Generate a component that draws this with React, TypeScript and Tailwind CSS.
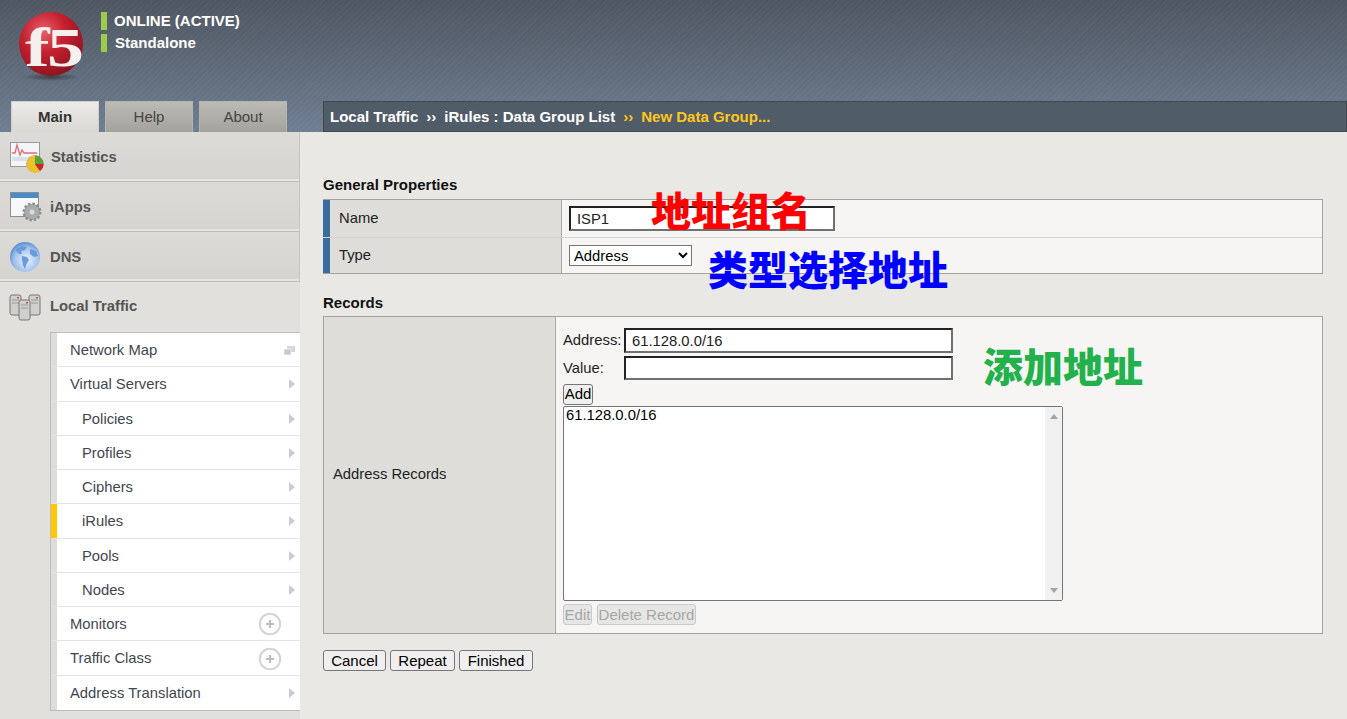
import React from "react";

const font = "font-['Liberation_Sans',Arial,sans-serif]";

function Logo() {
  return (
    <svg width="70" height="70" viewBox="0 0 70 70" className="block">
      <defs>
        <radialGradient id="rg" cx="38%" cy="30%" r="75%">
          <stop offset="0%" stopColor="#e8606b" />
          <stop offset="45%" stopColor="#c5202f" />
          <stop offset="100%" stopColor="#8a1420" />
        </radialGradient>
        <radialGradient id="sh" cx="50%" cy="50%" r="50%">
          <stop offset="0%" stopColor="#222" stopOpacity="0.6" />
          <stop offset="100%" stopColor="#222" stopOpacity="0" />
        </radialGradient>
      </defs>
      <ellipse cx="35" cy="66" rx="29" ry="4" fill="url(#sh)" />
      <circle cx="35" cy="33" r="32" fill="url(#rg)" />
      <text transform="translate(9 55) scale(1.32 1)" fontFamily="'Liberation Serif',serif" fontWeight="700" fontSize="56" letterSpacing="-2" fill="#f4f0ee">f5</text>
    </svg>
  );
}

function StatIcon() {
  return (
    <svg width="36" height="32" viewBox="0 0 36 32">
      <rect x="1.5" y="1.5" width="29" height="24" fill="#f4f5f7" stroke="#9a9a9a" />
      <path d="M3 12h3l2-8 3 10 2-5 2 3h13" fill="none" stroke="#de6e76" strokeWidth="1.3" />
      <path d="M3 17h26M3 19h26" stroke="#b6cde2" strokeWidth="1" />
      <circle cx="26" cy="23" r="8.5" fill="#c9272d" />
      <path d="M26 23V14.5a8.5 8.5 0 0 1 8.5 8.5z" fill="#5aa33a" />
      <path d="M26 23l5 7a8.5 8.5 0 0 1-13.5-7 8.5 8.5 0 0 1 8.5-8.5z" fill="#e8c42a" />
      <path d="M26 23h8.5a8.5 8.5 0 0 1-3.5 7z" fill="#c9272d" />
    </svg>
  );
}
function AppsIcon() {
  return (
    <svg width="36" height="32" viewBox="0 0 36 32">
      <rect x="1.5" y="1.5" width="28" height="24" fill="#f7f8fa" stroke="#8d8d8d" />
      <rect x="2" y="2" width="27" height="5" fill="#4a8cc9" />
      <circle cx="23" cy="21" r="8" fill="#a3a6a8" stroke="#8b8d8f" strokeWidth="3" strokeDasharray="2.4 1.8" />
      <circle cx="23" cy="21" r="7" fill="#a9abad" />
      <circle cx="23" cy="21" r="2.5" fill="#d8dadb" />
    </svg>
  );
}
function GlobeIcon() {
  return (
    <svg width="32" height="32" viewBox="0 0 32 32">
      <defs>
        <radialGradient id="gl" cx="55%" cy="60%" r="60%">
          <stop offset="0%" stopColor="#eef4fd" />
          <stop offset="70%" stopColor="#9fc0ec" />
          <stop offset="100%" stopColor="#5f8ccf" />
        </radialGradient>
      </defs>
      <circle cx="16" cy="16" r="15" fill="url(#gl)" />
      <path d="M7 8l6-3 5 1-2 3-4 1 1 3-3 0-3-3zM13 15l5 1 2 3-3 5-1 4-2-4-1-5zM21 8l6 2 2 5-4 1-4-3z" fill="#6a9bdc" />
    </svg>
  );
}
function TrafficIcon() {
  const S = ({ x, y }: { x: number; y: number }) => (
    <g>
      <rect x={x} y={y} width="11" height="20" rx="2" fill="#cfcfcc" stroke="#77777a" />
      <path d={`M${x + 2} ${y + 5}h7M${x + 2} ${y + 8}h7`} stroke="#9a9a9a" />
      <rect x={x + 7} y={y + 2} width="2" height="1.5" fill="#d84a4a" />
    </g>
  );
  return (
    <svg width="32" height="28" viewBox="0 0 32 28">
      <S x={1} y={1} />
      <S x={20} y={1} />
      <S x={10} y={6} />
    </svg>
  );
}

function Section({ icon, label, w }: { icon: React.ReactNode; label: string; w: string }) {
  return (
    <div className="h-[50px] border-r border-b border-r-[#c6c5c1] border-b-[#bdbcb8] bg-[#e6e5e2] pb-[2px]">
      <div className="flex h-full items-center bg-gradient-to-b from-[#dcdbd7] to-[#d5d4d0] pt-[3px]">
        <div className={`${w} pl-[9px]`}>{icon}</div>
        <span className="text-[14.8px] font-bold text-[#555]">{label}</span>
      </div>
    </div>
  );
}

function Row({ label, sub, active, kind }: { label: string; sub?: boolean; active?: boolean; kind: "arrow" | "plus" | "win" }) {
  return (
    <div className="flex h-[34.27px] items-stretch border-b border-[#e4e4e2] last:border-b-0">
      <div className={`w-[6px] shrink-0 ${active ? "bg-[#ffc800]" : "bg-[#dddddb]"}`} />
      <div className={`flex flex-1 items-center justify-between bg-white pt-[1px] ${sub ? "pl-[25px]" : "pl-[13px]"}`}>
        <span className="text-[14.8px] text-[#3f4650]">{label}</span>
        {kind === "arrow" && <span className="mr-[5px] h-0 w-0 border-y-[5px] border-l-[6px] border-y-transparent border-l-[#cccccc]" />}
        {kind === "win" && (
          <svg width="11" height="9" viewBox="0 0 11 9" className="mr-[5px]">
            <rect x="3" y="0" width="8" height="6" fill="#d6d6d6" />
            <rect x="0" y="3" width="7" height="6" fill="#c8c8c8" stroke="#fff" strokeWidth="0.6" />
          </svg>
        )}
        {kind === "plus" && (
          <svg width="24" height="24" viewBox="0 0 24 24" className="mr-[18px]">
            <circle cx="12" cy="12" r="10.2" fill="#fff" stroke="#d4d4d4" strokeWidth="2" />
            <path d="M12 8v8M8 12h8" stroke="#bdbdbd" strokeWidth="2" />
          </svg>
        )}
      </div>
    </div>
  );
}

const btn = "h-[21px] rounded-[3px] border border-[#767676] bg-[#efefef] px-0 text-[15px] leading-[18px] text-black";
const btnOff = "h-[21px] rounded-[3px] border border-[#c9c9c9] bg-[#e6e6e4] px-0 text-[15px] leading-[18px] text-[#a6a6a6]";
const inset = "border-2 border-t-[#222] border-l-[#222] border-r-[#707070] border-b-[#707070] bg-white text-[14.8px] text-[#222] pl-[6px] pt-[1px] outline-none";
const cjk = "absolute font-['Noto_Sans_CJK_SC',sans-serif] text-[40px] leading-[58px] font-black";

export default function App() {
  return (
    <div className={`relative h-[719px] w-[1347px] overflow-hidden bg-[#e9e8e5] ${font}`}>
      <header className="flex h-[132px] flex-col justify-between [background:repeating-linear-gradient(135deg,rgba(255,255,255,0.02)_0_2px,rgba(0,0,0,0.02)_2px_4px),linear-gradient(180deg,#4f5761_0%,#707f93_100%)]">
        <div className="flex pl-[16px] pt-[11px]">
          <Logo />
          <div className="ml-[15px] mt-[1px] flex flex-col gap-[4px] text-[15px] font-bold text-white">
            <div className="flex h-[18px] items-center gap-[7px]">
              <span className="h-[18px] w-[6px] bg-[#9ccc4c]" />
              <span>ONLINE (ACTIVE)</span>
            </div>
            <div className="flex h-[18px] items-center gap-[8px]">
              <span className="h-[18px] w-[6px] bg-[#9ccc4c]" />
              <span>Standalone</span>
            </div>
          </div>
        </div>
        <div className="flex h-[31px] items-stretch pl-[11px]">
          <div className="mr-[6px] flex w-[88px] items-center justify-center border border-b-0 border-[#cfcfcb] bg-gradient-to-b from-[#eceae7] to-[#d9d8d4] text-[15px] font-bold text-[#333]">Main</div>
          <div className="mr-[6px] flex w-[88px] items-center justify-center border border-b-0 border-[#b5b5b0] bg-gradient-to-b from-[#bbbab5] to-[#a3a29d] text-[15px] text-[#444]">Help</div>
          <div className="flex w-[88px] items-center justify-center border border-b-0 border-[#b5b5b0] bg-gradient-to-b from-[#bbbab5] to-[#a3a29d] text-[15px] text-[#444]">About</div>
          <div className="ml-[36px] flex flex-1 items-center border border-[#3f4751] bg-[#515c69] pl-[6px] pt-[1px] text-[15px] font-bold text-white">
            <span>Local Traffic</span>
            <span className="mx-[8px]">››</span>
            <span>iRules : Data Group List</span>
            <span className="mx-[8px] text-[#ffc61e]">››</span>
            <span className="text-[#ffc61e]">New Data Group...</span>
          </div>
        </div>
      </header>

      <div className="flex h-[587px]">
        <aside className="flex w-[300px] shrink-0 flex-col bg-[#e1e0dc]">
          <Section icon={<StatIcon />} label="Statistics" w="w-[51px]" />
          <Section icon={<AppsIcon />} label="iApps" w="w-[50px]" />
          <Section icon={<GlobeIcon />} label="DNS" w="w-[50px]" />
          <div className="flex-1 bg-[#e1e0dc]">
            <div className="flex h-[50px] items-center pb-[1px]">
              <div className="w-[50px] pl-[9px] pt-[3px]"><TrafficIcon /></div>
              <span className="text-[14.8px] font-bold text-[#555]">Local Traffic</span>
            </div>
            <div className="ml-[50px] border-y border-l border-[#bdbdbb]">
              <Row label="Network Map" kind="win" />
              <Row label="Virtual Servers" kind="arrow" />
              <Row label="Policies" sub kind="arrow" />
              <Row label="Profiles" sub kind="arrow" />
              <Row label="Ciphers" sub kind="arrow" />
              <Row label="iRules" sub active kind="arrow" />
              <Row label="Pools" sub kind="arrow" />
              <Row label="Nodes" sub kind="arrow" />
              <Row label="Monitors" kind="plus" />
              <Row label="Traffic Class" kind="plus" />
              <Row label="Address Translation" kind="arrow" />
            </div>
          </div>
        </aside>

        <main className="flex-1 pl-[23px] pr-[24px] text-[14.8px] text-[#222]">
          <h2 className="mt-[45px] h-[22px] text-[15px] leading-[16px] font-bold text-[#111]">General Properties</h2>
          <div className="border-y border-r border-[#a3a3a0] bg-[#f6f5f3]">
            <div className="flex h-[38px] border-b border-[#d3d2cf]">
              <div className="flex w-[239px] items-center border-l-[7px] border-r border-l-[#3a6c9b] border-r-[#a9a9a6] bg-[#deddd9] pl-[9px]">Name</div>
              <div className="flex items-center pl-[7px]">
                <input readOnly value="ISP1" className={`h-[25px] w-[266px] ${inset}`} />
              </div>
            </div>
            <div className="flex h-[35px]">
              <div className="flex w-[239px] items-center border-l-[7px] border-r border-l-[#3a6c9b] border-r-[#a9a9a6] bg-[#deddd9] pl-[9px]">Type</div>
              <div className="flex items-center pl-[7px]">
                <select defaultValue="Address" className="h-[21px] w-[123px] appearance-auto border border-[#767676] bg-white text-[14.8px] text-black">
                  <option>Address</option>
                </select>
              </div>
            </div>
          </div>

          <h2 className="mt-[21px] h-[21px] text-[15px] leading-[16px] font-bold text-[#111]">Records</h2>
          <div className="flex h-[318px] border border-[#a3a3a0] bg-[#f6f5f3]">
            <div className="flex w-[232px] items-center border-r border-[#a9a9a6] bg-[#deddd9] pb-[2px] pl-[9px]">Address Records</div>
            <div className="flex flex-col pl-[7px] pt-[11px]">
              <div className="flex h-[25px] items-center">
                <span className="w-[61px]">Address:</span>
                <input readOnly value="61.128.0.0/16" className={`h-[25px] w-[329px] ${inset}`} />
              </div>
              <div className="mt-[3px] flex h-[24px] items-center">
                <span className="w-[61px]">Value:</span>
                <input readOnly value="" className={`h-[24px] w-[329px] ${inset}`} />
              </div>
              <div className="mt-[3px]">
                <button className={`${btn} w-[30px]`}>Add</button>
              </div>
              <div className="mt-[1px] flex h-[195px] w-[500px] rounded-[2px] border border-[#767676] bg-white">
                <div className="flex-1 pl-[2px] leading-[17px] text-black">61.128.0.0/16</div>
                <div className="flex w-[17px] flex-col items-center justify-between bg-[#f1f1f1] py-[7px]">
                  <span className="h-0 w-0 border-x-[4.5px] border-b-[5px] border-x-transparent border-b-[#a3a3a3]" />
                  <span className="h-0 w-0 border-x-[4.5px] border-t-[5px] border-x-transparent border-t-[#a3a3a3]" />
                </div>
              </div>
              <div className="mt-[3px] flex gap-[5px]">
                <button className={`${btnOff} w-[29px]`}>Edit</button>
                <button className={`${btnOff} w-[99px]`}>Delete Record</button>
              </div>
            </div>
          </div>

          <div className="mt-[16px] flex gap-[4px]">
            <button className={`${btn} w-[63px]`}>Cancel</button>
            <button className={`${btn} w-[65px]`}>Repeat</button>
            <button className={`${btn} w-[74px]`}>Finished</button>
          </div>
        </main>
      </div>

      <span className={`${cjk} left-[651px] top-[180px] text-[#ff0000]`}>地址组名</span>
      <span className={`${cjk} left-[708px] top-[239px] text-[#0000ff]`}>类型选择地址</span>
      <span className={`${cjk} left-[983px] top-[336px] text-[#22b14c]`}>添加地址</span>
    </div>
  );
}
